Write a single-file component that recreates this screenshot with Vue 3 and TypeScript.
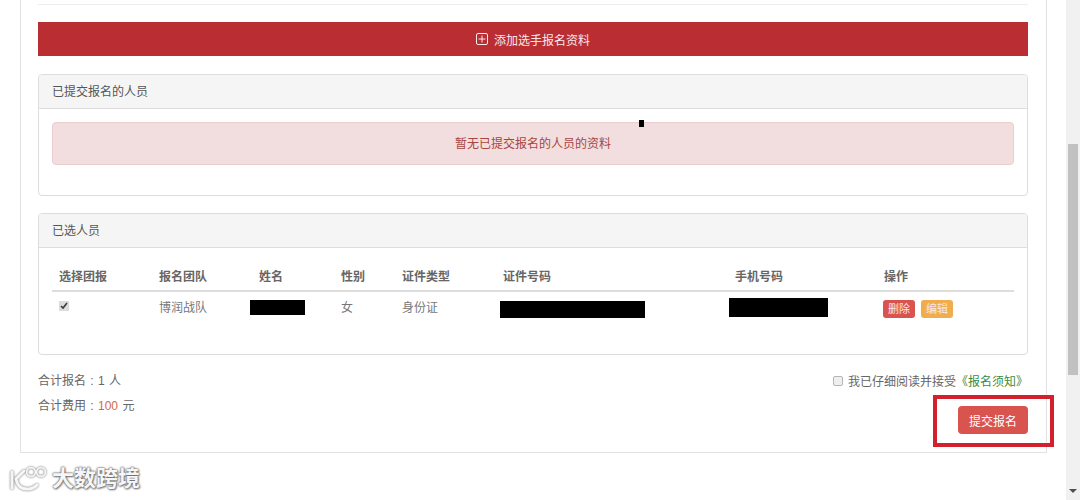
<script setup lang="ts">
const columns = [
  { label: '选择团报', width: 100 },
  { label: '报名团队', width: 100 },
  { label: '姓名', width: 82 },
  { label: '性别', width: 61 },
  { label: '证件类型', width: 101 },
  { label: '证件号码', width: 232 },
  { label: '手机号码', width: 149 },
  { label: '操作', width: 137 },
];
</script>

<template>
  <div class="page">
    <main class="main">
      <div class="box">
        <hr class="top-line" />
        <button class="add-btn" type="button">
          <svg class="add-icon" viewBox="0 0 12 12" width="12" height="12">
            <rect x="0.5" y="0.5" width="11" height="11" rx="1.5" fill="none" stroke="currentColor" />
            <path d="M2.5 6h7M6 2.5v7" fill="none" stroke="currentColor" />
          </svg>
          <span>添加选手报名资料</span>
        </button>

        <section class="panel">
          <div class="panel-head">已提交报名的人员</div>
          <div class="panel-body submitted">
            <div class="alert">暂无已提交报名的人员的资料</div>
            <i class="cursor-dot"></i>
          </div>
        </section>

        <section class="panel">
          <div class="panel-head">已选人员</div>
          <div class="panel-body">
            <table class="table">
              <colgroup>
                <col v-for="col in columns" :key="col.label" :style="{ width: col.width + 'px' }" />
              </colgroup>
              <thead>
                <tr>
                  <th v-for="col in columns" :key="col.label">{{ col.label }}</th>
                </tr>
              </thead>
              <tbody>
                <tr>
                  <td><input class="check check-row" type="checkbox" checked /></td>
                  <td>博润战队</td>
                  <td class="masked"><i class="mask mask-name"></i></td>
                  <td>女</td>
                  <td>身份证</td>
                  <td class="masked"><i class="mask mask-id"></i></td>
                  <td class="masked"><i class="mask mask-phone"></i></td>
                  <td class="ops">
                    <span class="tag tag-del">删除</span>
                    <span class="tag tag-edit">编辑</span>
                  </td>
                </tr>
              </tbody>
            </table>
          </div>
        </section>

        <div class="footer">
          <div class="totals">
            <p>合计报名 : 1 人</p>
            <p>合计费用 : <em>100</em> 元</p>
          </div>
          <div class="submit-side">
            <label class="agree">
              <input class="check check-empty" type="checkbox" />
              <span>我已仔细阅读并接受<a>《报名须知》</a></span>
            </label>
            <div class="submit-wrap">
              <button class="submit-btn" type="button">提交报名</button>
              <i class="highlight"></i>
            </div>
          </div>
        </div>
      </div>
    </main>

    <aside class="scrollbar">
      <div class="thumb"></div>
      <i class="arrow"></i>
    </aside>

    <div class="watermark">
      <svg viewBox="0 0 44 30" width="44" height="30" fill="none" stroke="#f6f6f6">
        <g class="logo-shadow">
          <path d="M4 8v16" stroke-width="3" stroke-linecap="round" />
          <path d="M16 7l-8 8q2 11 13 10 5-.5 8-4" stroke-width="3" stroke-linecap="round" />
          <circle cx="23" cy="8" r="4.4" stroke-width="1.8" />
          <circle cx="33" cy="8" r="4.4" stroke-width="1.8" />
        </g>
      </svg>
      <span>大数跨境</span>
    </div>
  </div>
</template>

<style scoped>
.page {
  position: relative;
  display: flex;
  width: 1080px;
  height: 500px;
  overflow: hidden;
  background: #fff;
  color: #666;
  font-family: "Liberation Sans", "Noto Sans CJK SC", sans-serif;
  font-size: 12px;
}

.main {
  flex: 1;
  padding-left: 20px;
}

.box {
  box-sizing: border-box;
  width: 1027px;
  height: 453px;
  padding: 4px 18px 0 17px;
  border: 1px solid #e2e2e2;
  border-top: 0;
}

.top-line {
  height: 1px;
  margin: 0 0 17px;
  border: 0;
  background: #eee;
}

.add-btn {
  display: flex;
  align-items: center;
  justify-content: center;
  gap: 6px;
  width: 100%;
  height: 34px;
  padding: 0;
  border: 0;
  background: #b92d33;
  color: #fbe9e9;
  font: inherit;
}

.add-icon {
  margin-top: -1px;
}

.panel {
  margin-top: 18px;
  border: 1px solid #ddd;
  border-radius: 4px;
  overflow: hidden;
}

.panel + .panel {
  margin-top: 17px;
}

.panel-head {
  height: 33px;
  padding-left: 13px;
  border-bottom: 1px solid #ddd;
  background: #f5f5f5;
  color: #555;
  line-height: 34px;
}

.panel-body {
  position: relative;
  height: 106px;
  padding: 14px 13px;
  box-sizing: border-box;
}

.panel-body.submitted {
  height: 86px;
  padding-top: 13px;
}

.alert {
  height: 43px;
  box-sizing: border-box;
  border: 1px solid #ebccd1;
  border-radius: 4px;
  background: #f2dede;
  color: #a94442;
  line-height: 42px;
  text-align: center;
}

.cursor-dot {
  position: absolute;
  left: 600px;
  top: 11px;
  width: 5px;
  height: 7px;
  background: #000;
}

.table {
  width: 962px;
  border-collapse: collapse;
  table-layout: fixed;
}

.table th {
  height: 26px;
  padding: 0 7px 2px;
  border-bottom: 2px solid #ddd;
  color: #666;
  font-weight: 700;
  text-align: left;
}

.table td {
  height: 29px;
  padding: 0 7px 3px;
  color: #777;
}

.table td.ops {
  padding: 2px 0 1px 6px;
}

.masked {
  position: relative;
}

.mask {
  position: absolute;
  background: #000;
}

.mask-name {
  left: -2px;
  top: 8px;
  width: 55px;
  height: 15px;
}

.mask-id {
  left: 4px;
  top: 9px;
  width: 145px;
  height: 17px;
}

.mask-phone {
  left: 1px;
  top: 6px;
  width: 99px;
  height: 19px;
}

.check {
  width: 10px;
  height: 10px;
  margin: 0;
  vertical-align: 0;
  accent-color: #ddd;
}

.check-row {
  margin-top: 2px;
}

.check-empty {
  appearance: none;
  box-sizing: border-box;
  border: 1px solid #b5b5b5;
  border-radius: 2px;
  background: #efefef;
}

.tag {
  display: inline-block;
  width: 32px;
  height: 18px;
  margin-right: 6px;
  border-radius: 3px;
  color: #fbe6e4;
  font-size: 11px;
  line-height: 18px;
  text-align: center;
  vertical-align: top;
}

.tag-del {
  background: #d9534f;
}

.tag-edit {
  background: #f0ad4e;
}

.footer {
  display: flex;
  justify-content: space-between;
  color: #666;
}

.totals p {
  margin: 0;
  height: 25px;
  line-height: 25px;
  word-spacing: 1px;
}

.totals {
  padding-top: 14px;
}

.totals em {
  color: #d2693f;
  font-style: normal;
}

.submit-side {
  display: flex;
  flex-direction: column;
  align-items: flex-end;
  padding-top: 13px;
}

.agree {
  display: flex;
  align-items: center;
  gap: 5px;
  height: 25px;
}

.agree a {
  color: #3c8a3c;
}

.submit-wrap {
  position: relative;
  margin-top: 13px;
}

.submit-btn {
  display: block;
  width: 70px;
  height: 28px;
  padding: 0;
  border: 0;
  border-radius: 4px;
  background: #d9534f;
  color: #fff;
  font: inherit;
}

.highlight {
  position: absolute;
  left: -25px;
  top: -11px;
  width: 121px;
  height: 52px;
  box-sizing: border-box;
  border: 4px solid #d2202c;
}

.scrollbar {
  display: flex;
  flex-direction: column;
  align-items: center;
  flex: none;
  width: 14px;
  background: #f1f1f1;
}

.thumb {
  width: 10px;
  height: 231px;
  margin-top: 144px;
  background: #c1c1c1;
}

.arrow {
  width: 0;
  height: 0;
  margin-top: auto;
  margin-bottom: 7px;
  border: 4px solid transparent;
  border-top-color: #505050;
  border-bottom-width: 0;
}

.watermark {
  position: absolute;
  left: 8px;
  top: 464px;
  display: flex;
  align-items: center;
  color: #f6f6f6;
  font-size: 22px;
  font-weight: 700;
  line-height: 30px;
  text-shadow: 0 0 2px #666, 0 0 2px #666, 1px 1px 2px #888;
}

.logo-shadow {
  filter: drop-shadow(0 0 1px #666);
}
</style>
